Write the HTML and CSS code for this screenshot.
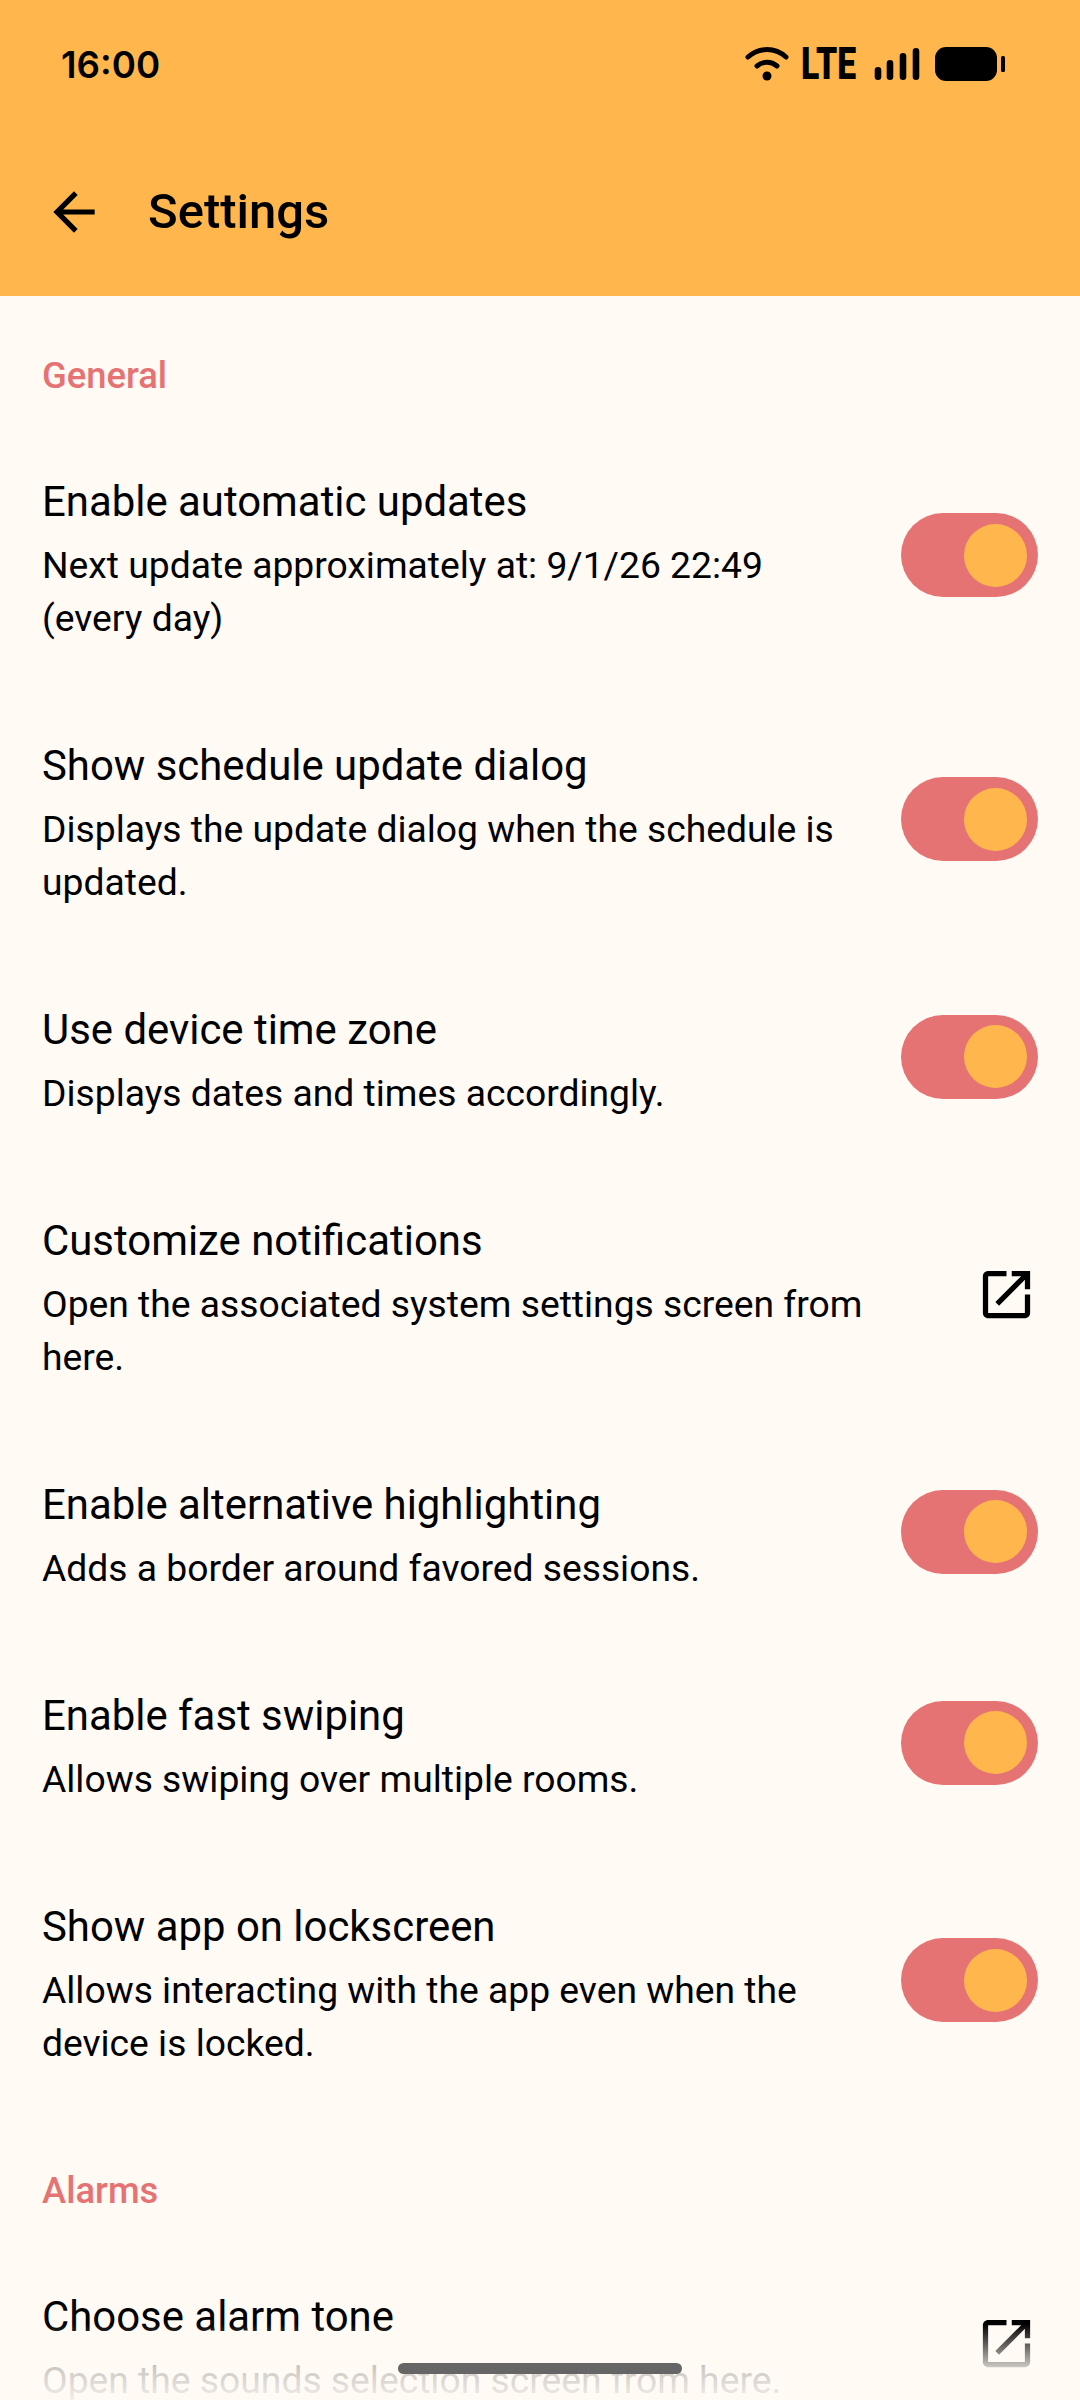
FILE: index.html
```html
<!DOCTYPE html>
<html lang="en">
<head>
<meta charset="utf-8">
<title>Settings</title>
<link rel="stylesheet" href="styles.css">
</head>
<body>
<div class="screen">
  <header class="appbar">
    <div class="status">
      <span class="clock">16:00</span>
      <div class="status-icons">
        <svg class="wifi" viewBox="0 0 44 34"><path d="M3 10C14 0 30 0 41 10M12 19c6-5 14-5 20 0" fill="none" stroke="#000" stroke-width="5" stroke-linecap="round"/><circle cx="22" cy="29" r="4.5" fill="#000"/></svg>
        <span class="lte"><span class="lte-text">LTE</span></span>
        <svg class="signal" viewBox="0 0 46 32"><g fill="none" stroke="#000" stroke-width="6.6" stroke-linecap="round"><path d="M4 22.3v6.4M16 15.3v13.4M29 8.3v20.4M42 3.3v25.4"/></g></svg>
        <svg class="battery" viewBox="0 0 70 34"><rect x="0" y="0" width="62" height="34" rx="11" fill="#000"/><rect x="66" y="9" width="4" height="16" rx="1.5" fill="#000"/></svg>
      </div>
    </div>
    <div class="toolbar">
      <svg class="back" viewBox="0 0 24 24"><path d="M20 11H7.83l5.59-5.59L12 4l-8 8 8 8 1.41-1.41L7.83 13H20v-2z"/></svg>
      <h1 class="title">Settings</h1>
    </div>
  </header>
  <main>
    <h2 class="section">General</h2>
    <div class="row">
      <div class="text"><div class="name">Enable automatic updates</div><div class="desc">Next update approximately at: 9/1/26 22:49<br>(every day)</div></div>
      <div class="control"><span class="switch"><span class="thumb"></span></span></div>
    </div>
    <div class="row">
      <div class="text"><div class="name">Show schedule update dialog</div><div class="desc">Displays the update dialog when the schedule is updated.</div></div>
      <div class="control"><span class="switch"><span class="thumb"></span></span></div>
    </div>
    <div class="row">
      <div class="text"><div class="name">Use device time zone</div><div class="desc">Displays dates and times accordingly.</div></div>
      <div class="control"><span class="switch"><span class="thumb"></span></span></div>
    </div>
    <div class="row">
      <div class="text"><div class="name">Customize notifications</div><div class="desc">Open the associated system settings screen from here.</div></div>
      <div class="control"><svg class="open" viewBox="0 0 24 24"><path d="M19 19H5V5h7V3H5c-1.11 0-2 .9-2 2v14c0 1.1.89 2 2 2h14c1.1 0 2-.9 2-2v-7h-2v7zM14 3v2h3.59l-9.83 9.83 1.41 1.41L19 6.41V10h2V3h-7z"/></svg></div>
    </div>
    <div class="row">
      <div class="text"><div class="name">Enable alternative highlighting</div><div class="desc">Adds a border around favored sessions.</div></div>
      <div class="control"><span class="switch"><span class="thumb"></span></span></div>
    </div>
    <div class="row">
      <div class="text"><div class="name">Enable fast swiping</div><div class="desc">Allows swiping over multiple rooms.</div></div>
      <div class="control"><span class="switch"><span class="thumb"></span></span></div>
    </div>
    <div class="row">
      <div class="text"><div class="name">Show app on lockscreen</div><div class="desc">Allows interacting with the app even when the device is locked.</div></div>
      <div class="control"><span class="switch"><span class="thumb"></span></span></div>
    </div>
    <h2 class="section">Alarms</h2>
    <div class="row">
      <div class="text"><div class="name">Choose alarm tone</div><div class="desc">Open the sounds selection screen from here.</div></div>
      <div class="control"><svg class="open" viewBox="0 0 24 24"><path d="M19 19H5V5h7V3H5c-1.11 0-2 .9-2 2v14c0 1.1.89 2 2 2h14c1.1 0 2-.9 2-2v-7h-2v7zM14 3v2h3.59l-9.83 9.83 1.41 1.41L19 6.41V10h2V3h-7z"/></svg></div>
    </div>
  </main>
  <div class="fade"></div>
  <div class="pill"></div>
</div>
</body>
</html>
```
FILE: styles.css
```css
* { box-sizing: border-box; }
html, body { margin: 0; padding: 0; }
body { font-family: Roboto, "Noto Sans", sans-serif; background: #FFFAF4; color: #000; }
.screen { position: relative; width: 1080px; height: 2400px; overflow: hidden; background: #FFFAF4; }

.appbar { height: 296px; background: #FFB74D; display: flex; flex-direction: column; }
.status { height: 128px; padding: 0 75px 0 61px; display: flex; align-items: center; justify-content: space-between; }
.clock { font-family: Inter, Roboto, sans-serif; font-weight: 600; font-size: 36.7px; }
.status-icons { display: flex; align-items: center; }
.wifi { width: 44px; height: 34px; display: block; margin-right: 15px; }
.lte { width: 53px; height: 34px; display: block; margin-right: 17px; position: relative; }
.lte-text { position: absolute; left: -3px; top: -6px; font-weight: 900; font-size: 45px; line-height: 46px; transform: scaleX(0.75); transform-origin: left center; }
.signal { width: 46px; height: 32px; display: block; margin-right: 15px; }
.battery { width: 70px; height: 34px; display: block; }

.toolbar { flex: 1; display: flex; align-items: center; padding: 0 0 0 43px; }
.back { width: 62px; height: 62px; display: block; margin-right: 43px; }
.title { margin: 0; font-size: 49px; font-weight: 500; line-height: 60px; }

.section { margin: 0; padding: 55px 42px 21px; font-size: 36.4px; line-height: 50px; font-weight: 500; color: #E57373; }
.row { display: flex; align-items: center; padding: 43px 42px 41px; gap: 30px; }
.text { flex: 1; min-width: 0; padding-top: 5px; }
.name { font-size: 41.9px; line-height: 64px; margin-bottom: 5px; }
.desc { font-size: 37.25px; line-height: 53px; }
.control { width: 137px; flex: none; display: flex; justify-content: flex-end; }
.switch { width: 137px; height: 84px; border-radius: 42px; background: #E57373; display: flex; align-items: center; justify-content: flex-end; padding-right: 11px; }
.thumb { width: 63px; height: 63px; border-radius: 50%; background: #FFB74D; }
.open { width: 63px; height: 63px; display: block; }

.fade { position: absolute; left: 0; right: 0; bottom: 0; height: 76px; background: linear-gradient(to bottom, rgba(255,250,244,0), rgba(255,250,244,.8) 57%, rgba(255,250,244,.95)); }
.pill { position: absolute; left: 398px; top: 2363px; width: 284px; height: 11px; border-radius: 6px; background: #666; }
```
